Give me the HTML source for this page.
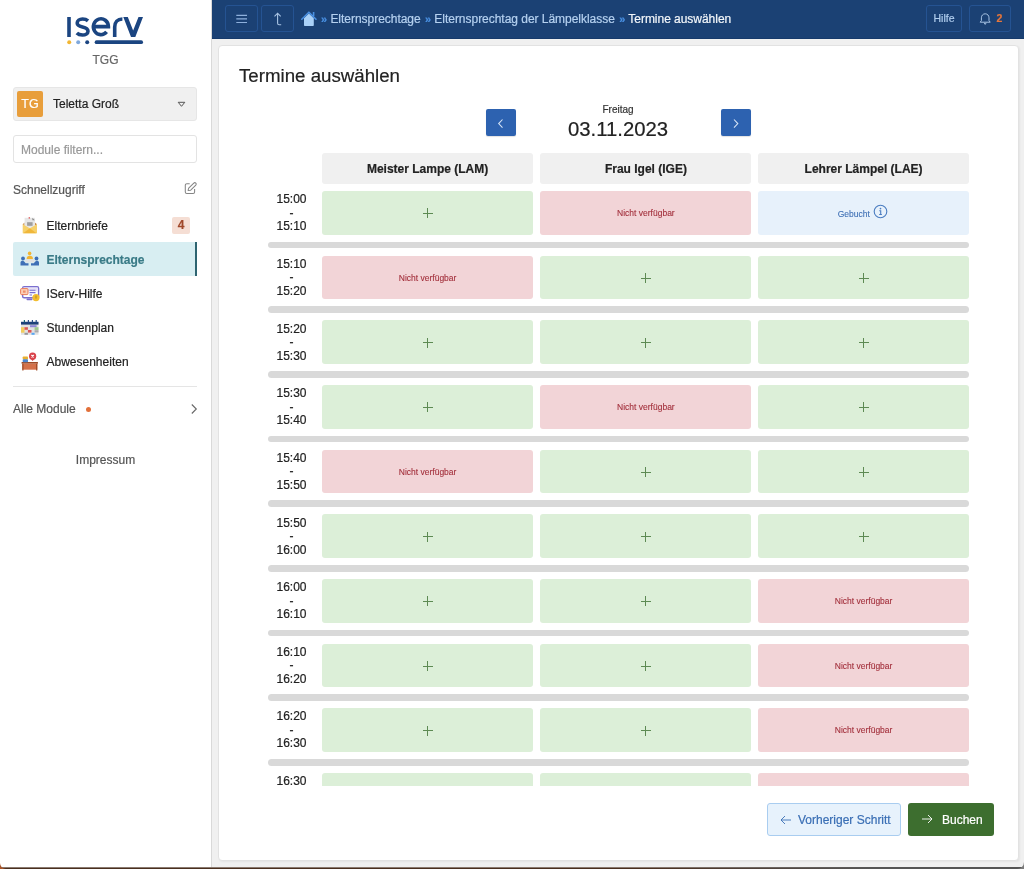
<!DOCTYPE html>
<html lang="de">
<head>
<meta charset="utf-8">
<title>Termine auswählen</title>
<style>
*{box-sizing:border-box;margin:0;padding:0}
html,body{width:1024px;height:869px;overflow:hidden;background:#fff}
body{font-family:"Liberation Sans",sans-serif;font-size:12px;color:#222;position:relative;will-change:transform;-webkit-text-stroke:0.2px currentColor}
.abs{position:absolute}
/* sidebar */
#sb{position:absolute;left:0;top:0;width:212px;height:869px;background:#fff;border-right:1px solid #d9d9d9}
#tgg{position:absolute;left:0;width:211px;top:52px;text-align:center;color:#666;font-size:12px;line-height:16px}
#user{position:absolute;left:13px;top:87px;width:184px;height:34px;background:#f0f0f0;border:1px solid #e6e6e6;border-radius:3px}
#av{position:absolute;left:3px;top:3px;width:26px;height:26px;background:#e89e3b;border-radius:2px;color:#fff;font-size:12.5px;line-height:26px;text-align:center}
#uname{position:absolute;left:39px;top:8px;font-size:12px;line-height:16px;color:#222}
#tri{position:absolute;left:163px;top:13px}
#filter{position:absolute;left:13px;top:135px;width:184px;height:28px;border:1px solid #e3e3e3;border-radius:3px;background:#fff}
#filter span{position:absolute;left:7px;top:6px;color:#999;font-size:12px;line-height:16px}
#schnell{position:absolute;left:13px;top:182px;color:#555;font-size:12px;line-height:16px}
#edit{position:absolute;left:183px;top:181px}
.mi{position:absolute;left:13px;width:184px;height:34px}
.mi .t{position:absolute;left:33.5px;top:10px;font-size:12px;line-height:16px;color:#222}
.mi svg{position:absolute;left:7px;top:5px}
.mi.act{background:#d8eef2;border-right:2px solid #2e6471;border-radius:2px 0 0 2px}
.mi.act .t{color:#3a7b87;font-weight:bold}
#badge{position:absolute;left:172px;top:217px;width:18px;height:17px;background:#f5ded4;border-radius:2px;color:#a0482a;font-weight:bold;font-size:12px;line-height:17px;text-align:center}
#div1{position:absolute;left:13px;top:386px;width:184px;height:1px;background:#e5e5e5}
#alle{position:absolute;left:13px;top:401px;color:#555;font-size:12px;line-height:16px}
#dot{position:absolute;left:86px;top:407px;width:5px;height:5px;border-radius:50%;background:#e2703a}
#chev{position:absolute;left:190px;top:403px}
#imp{position:absolute;left:0;width:211px;top:452px;text-align:center;color:#555;font-size:12px;line-height:16px}
/* topbar */
#top{position:absolute;left:212px;top:0;width:812px;height:39px;background:#1b4174;border-bottom:1px solid #163a6b}
.tb{position:absolute;top:5px;height:27px;border:1px solid #255392;border-radius:3px}
.bc{position:absolute;top:10.8px;font-size:12px;line-height:16px;color:#b5d1f0;white-space:nowrap;letter-spacing:-0.03px}
.raq{color:#4a90e2;font-size:11px;font-weight:bold;position:relative;left:1px;top:0px;margin-right:1px}
/* main */
#main{position:absolute;left:212px;top:38px;width:812px;height:831px;background:#f0f0f0}
#card{position:absolute;left:218px;top:45px;width:801px;height:816px;background:#fff;border:1px solid #e2e2e2;border-radius:4px;box-shadow:1px 1px 2px rgba(0,0,0,0.05)}
#title{position:absolute;left:239px;top:65px;font-size:18.7px;line-height:22px;color:#222;white-space:nowrap}
.navb{position:absolute;top:109px;width:30px;height:27px;background:#2d62b0;border-radius:2px;box-shadow:0 1px 1px rgba(0,0,0,0.12)}
#fr{position:absolute;left:568px;width:100px;top:102.7px;text-align:center;font-size:10px;line-height:13px;color:#333}
#date{position:absolute;left:558px;width:120px;top:116.8px;text-align:center;font-size:20.3px;line-height:24px;color:#222}
.hd{position:absolute;top:153px;height:31px;width:211.2px;background:#f0f0f0;border-radius:3px;text-align:center;font-weight:bold;font-size:12px;line-height:33px;color:#222}
#clip{position:absolute;left:0;top:0;width:1024px;height:786px;overflow:hidden}
.cell{position:absolute;border-radius:3px;display:flex;align-items:center;justify-content:center}
.cg{background:#dcefd8}
.cr{background:#f2d4d7}
.cb{background:#e7f1fb}
.cb > *{position:relative;left:-0.8px}
.plus{display:block;width:10px;height:10px;position:relative;margin-top:1px}
.plus:before{content:"";position:absolute;left:4.5px;top:0;width:1px;height:10px;background:#5d8a53}
.plus:after{content:"";position:absolute;left:0;top:4.5px;width:10px;height:1px;background:#5d8a53}
.na{-webkit-text-stroke:0.1px currentColor;font-size:8.5px;color:#a3303c;line-height:11px;padding-top:1px}
.gb{-webkit-text-stroke:0.1px currentColor;font-size:8.5px;color:#3f70b5;line-height:11px;padding-top:3px}
.info{margin-left:3px;margin-top:-2px}
.time{position:absolute;left:262px;width:59px;text-align:center;font-size:12px;line-height:13.5px;color:#222}
.sep{position:absolute;left:268px;width:701px;height:6.7px;background:#d9d9d9;border-radius:4px}
.btn{position:absolute;top:803px;height:33px;border-radius:3px;font-size:12px;line-height:17.4px}
#prev{left:767px;width:134px;background:#e7f2fc;border:1px solid #a9cdf0;color:#3a6fb5}
#book{left:908px;width:86px;background:#3d6e2f;color:#fff}
#bottomstrip{position:absolute;left:0;top:867px;width:1024px;height:2px;background:linear-gradient(to bottom,#8a7a70 0,#8a7a70 1px,#4a2f1e 1px);}
#bsr{position:absolute;left:640px;top:867px;width:384px;height:2px;background:linear-gradient(to right,rgba(80,80,80,0),#555 60%)}
</style>
</head>
<body>
<div id="sb">
  <svg class="abs" style="left:60px;top:8px" width="90" height="40" viewBox="0 0 90 40">
    <g fill="none" stroke="#1b4581" stroke-width="3.6">
      <path d="M9 9V29" stroke-linecap="butt"/>
      <path d="M28 12.8C26.5 11.5 24.5 11 22.5 11C19.5 11 17.2 12.8 17.2 15C17.2 17.5 19.5 18.3 22.5 19C25.8 19.7 28 20.7 28 23.2C28 25.6 25.5 27 22.5 27C20 27 18 26.2 16.8 25"/>
      <path d="M33.3 18.6H48.4A7.5 7.95 0 1 0 46.6 23.9"/>
      <path d="M54.7 29V19C54.7 14 57.5 11 62.4 11"/>
    </g>
    <polygon fill="#1b4581" points="63.3,9 67.8,9 73.15,22.5 78.5,9 83,9 75.3,29 71,29"/>
    <circle cx="9.2" cy="34.3" r="2" fill="#f2b632"/>
    <circle cx="18.2" cy="34.3" r="2" fill="#7fa8dc"/>
    <circle cx="27.2" cy="34.3" r="2" fill="#1b4581"/>
    <path d="M36.5 34.2H81.2" stroke="#1b4581" stroke-width="3.7" stroke-linecap="round"/>
  </svg>
  <div id="tgg">TGG</div>
  <div id="user">
    <div id="av">TG</div>
    <div id="uname">Teletta Groß</div>
    <svg id="tri" width="9" height="7" viewBox="0 0 9 7"><path d="M1.2 1.3H7.8L4.5 5.3Z" fill="none" stroke="#555" stroke-width="1" stroke-linejoin="round"/></svg>
  </div>
  <div id="filter"><span>Module filtern...</span></div>
  <div id="schnell">Schnellzugriff</div>
  <svg id="edit" width="16" height="14" viewBox="0 0 16 14"><path d="M6.7 2.7H3.8C3 2.7 2.3 3.4 2.3 4.2V10.9C2.3 11.7 3 12.4 3.8 12.4H10.1C10.9 12.4 11.6 11.7 11.6 10.9V8" fill="none" stroke="#858585" stroke-width="1.05"/><path d="M5.1 9.4L5.7 7.2L10.8 2.1C11.4 1.5 12.2 1.5 12.8 2.1C13.4 2.7 13.4 3.5 12.8 4.1L7.7 9.2Z" fill="none" stroke="#858585" stroke-width="1.05" stroke-linejoin="round"/></svg>

  <div class="mi" style="top:208px">
    <svg width="22" height="24" viewBox="0 0 22 24">
      <path d="M2.7 11.2L4.6 9.6V13ZM17 11.2L14.9 9.6V13Z" fill="#c98a4a"/>
      <rect x="4.6" y="4.8" width="10.3" height="10" fill="#e6e6e6"/>
      <path d="M12.4 4.8L14.9 7.3H12.4Z" fill="#8a8a8a"/>
      <rect x="7.1" y="9.2" width="5.5" height="3.6" fill="#9d9d9d"/>
      <circle cx="9.3" cy="4.9" r="0.8" fill="#e06060"/>
      <path d="M2.7 11.2L9.8 15.2L17 11.2V20.3H2.7Z" fill="#f6d06a"/>
      <path d="M3.2 20.3L9.8 15.2L16.5 20.3Z" fill="#f0b73a"/>
    </svg>
    <span class="t">Elternbriefe</span>
  </div>
  <div id="badge">4</div>
  <div class="mi act" style="top:242px">
    <svg width="22" height="24" viewBox="0 0 22 24">
      <circle cx="9.6" cy="6.4" r="1.8" fill="#f2b431"/>
      <path d="M6.6 12.2C6.6 9.8 7.8 8.8 9.8 8.8C11.8 8.8 13 9.8 13 12.2Z" fill="#f2b431"/>
      <rect x="5.2" y="12.2" width="9.4" height="3.3" rx="1" fill="#e2e2e2"/>
      <circle cx="3" cy="11.5" r="1.9" fill="#3f6fb6"/>
      <path d="M0.5 18.5V15.5C0.5 14.3 1.5 13.8 2.6 13.8C3.8 13.8 4.6 14.8 5.6 16.3H8.5V18.5Z" fill="#3f6fb6"/>
      <circle cx="16.5" cy="11.5" r="1.9" fill="#3f6fb6"/>
      <path d="M19 18.5V15.5C19 14.3 18 13.8 16.9 13.8C15.7 13.8 14.9 14.8 13.9 16.3H11V18.5Z" fill="#3f6fb6"/>
    </svg>
    <span class="t">Elternsprechtage</span>
  </div>
  <div class="mi" style="top:276px">
    <svg width="22" height="24" viewBox="0 0 22 24">
      <rect x="2.6" y="5.7" width="16" height="11" rx="1.5" fill="#fff" stroke="#7b6fcf" stroke-width="1.4"/>
      <rect x="3.4" y="6.5" width="14.4" height="4" fill="#e6e2f7"/>
      <rect x="6.5" y="17.6" width="6" height="1.6" rx="0.8" fill="#7b6fcf"/>
      <path d="M9.5 9.3H15.5M9.5 11.6H15.5M9.5 14H12" stroke="#7b6fcf" stroke-width="1.1"/>
      <rect x="0.6" y="7.6" width="7.4" height="6" rx="1" fill="#fbd0b8" stroke="#ea7c58" stroke-width="1"/>
      <rect x="3" y="9.5" width="2.6" height="2.2" fill="#ef8f6a"/>
      <circle cx="16" cy="16.6" r="3.6" fill="#f2bd2f"/>
      <rect x="15.5" y="14.6" width="1" height="3" fill="#b08a20"/>
    </svg>
    <span class="t">IServ-Hilfe</span>
  </div>
  <div class="mi" style="top:310px">
    <svg width="22" height="24" viewBox="0 0 22 24">
      <rect x="1" y="6.8" width="17.5" height="13" fill="#e2e2e2"/>
      <rect x="1" y="6.8" width="17.5" height="2.8" fill="#1c3f78"/>
      <rect x="3.8" y="5" width="1.2" height="2.4" fill="#1c6a78"/>
      <rect x="7.8" y="5" width="1.2" height="2.4" fill="#2a4f8a"/>
      <rect x="11.8" y="5" width="1.2" height="2.4" fill="#2a4f8a"/>
      <rect x="15.6" y="5" width="1.2" height="2.4" fill="#2a4f8a"/>
      <rect x="10" y="10.2" width="6.6" height="2" fill="#8d86d6"/>
      <rect x="1" y="12.2" width="3.5" height="5.5" fill="#f2cd5e"/>
      <rect x="4.5" y="12.2" width="3.4" height="2.6" fill="#dc5656"/>
      <rect x="7.9" y="15" width="3.6" height="2.6" fill="#dc5656"/>
      <rect x="14.6" y="12.2" width="3.9" height="2.8" fill="#9fcb8e"/>
      <rect x="4.5" y="17.8" width="3.4" height="2" fill="#999"/>
      <rect x="14.6" y="15.2" width="3.9" height="2.2" fill="#aaa"/>
      <rect x="11.5" y="17.8" width="3.1" height="2" fill="#58a6f2"/>
    </svg>
    <span class="t">Stundenplan</span>
  </div>
  <div class="mi" style="top:344px">
    <svg width="22" height="24" viewBox="0 0 22 24">
      <rect x="1.6" y="13" width="16.3" height="1.7" fill="#9c4a26"/>
      <rect x="2.3" y="14.7" width="15" height="6" fill="#d4714a"/>
      <rect x="2.3" y="14.7" width="1.2" height="6.8" fill="#9c4a26"/>
      <rect x="16.1" y="14.7" width="1.2" height="6.8" fill="#9c4a26"/>
      <rect x="2.7" y="7.5" width="5.3" height="3" rx="0.8" fill="#e8b030"/>
      <rect x="2.7" y="10.3" width="5.3" height="3" rx="0.8" fill="#4a86d0"/>
      <circle cx="12.6" cy="7.2" r="3.6" fill="#d9424a"/>
      <path d="M10.3 9.6L12.6 12L14.9 9.6Z" fill="#d9424a"/>
      <path d="M11.4 6L13.8 8.4M13.8 6L11.4 8.4" stroke="#fff" stroke-width="1.2"/>
    </svg>
    <span class="t">Abwesenheiten</span>
  </div>
  <div id="div1"></div>
  <div id="alle">Alle Module</div>
  <div id="dot"></div>
  <svg id="chev" width="8" height="12" viewBox="0 0 8 12"><path d="M1.8 1.5L6.3 6L1.8 10.5" fill="none" stroke="#666" stroke-width="1.1"/></svg>
  <div id="imp">Impressum</div>
</div>

<div id="main"></div>
<div id="top">
  <div class="tb" style="left:13px;width:33px">
    <svg class="abs" style="left:10px;top:8px" width="12" height="10" viewBox="0 0 12 10"><path d="M0.3 1.4H11M0.3 4.9H11M0.3 8.5H11" stroke="#8eb0dc" stroke-width="1.2"/></svg>
  </div>
  <div class="tb" style="left:49px;width:33px">
    <svg class="abs" style="left:11px;top:6px" width="10" height="14" viewBox="0 0 10 14"><path d="M1.5 4.3L4.6 1.2L7.7 4.3M4.6 1.2V11.3C4.6 12.2 5.2 12.8 6.1 12.8H8.2" fill="none" stroke="#a9c4e4" stroke-width="1.1"/></svg>
  </div>
  <svg class="abs" style="left:88px;top:10px" width="18" height="17" viewBox="0 0 18 17">
    <path d="M4 8.2V15.2C4 15.7 4.3 16 4.8 16H13C13.5 16 13.8 15.7 13.8 15.2V8.2L8.9 3.5Z" fill="#a9d0f7"/>
    <path d="M1.8 9.2L8.9 2.2L16 9.2" fill="none" stroke="#4a90e2" stroke-width="1.6" stroke-linejoin="round" stroke-linecap="round"/>
    <rect x="12.8" y="2" width="1.6" height="4" fill="#4a90e2"/>
  </svg>
  <span class="bc" style="left:108px"><span class="raq">»</span> Elternsprechtage <span class="raq">»</span> Elternsprechtag der Lämpelklasse <span class="raq">»</span> <span style="color:#f2f6fa">Termine auswählen</span></span>
  <div class="tb" style="left:714px;width:36px">
    <span class="abs" style="left:6.5px;top:5.3px;font-size:10.5px;line-height:14px;color:#b0cdee">Hilfe</span>
  </div>
  <div class="tb" style="left:757px;width:42px">
    <svg class="abs" style="left:8.5px;top:6px" width="13" height="14" viewBox="0 0 13 14"><path d="M1.2 10.2H11.2L10 8.6V5.8C10 3.6 8.5 1.8 6.2 1.8C3.9 1.8 2.4 3.6 2.4 5.8V8.6Z" fill="none" stroke="#a9c4e4" stroke-width="1" stroke-linejoin="round"/><path d="M5.2 10.8L6.2 12.4L7.2 10.8" fill="none" stroke="#a9c4e4" stroke-width="1"/></svg>
    <span class="abs" style="left:26.5px;top:4.8px;font-size:10.5px;line-height:14px;color:#e8763a;font-weight:bold">2</span>
  </div>
</div>

<div id="card"></div>
<div id="title">Termine auswählen</div>
<div class="navb" style="left:486px">
  <svg class="abs" style="left:10px;top:8.5px" width="10" height="12" viewBox="0 0 10 12"><path d="M6.5 1.5L2.7 5.6L6.5 9.7" fill="none" stroke="#d5e3f5" stroke-width="1.1"/></svg>
</div>
<div id="fr">Freitag</div>
<div id="date">03.11.2023</div>
<div class="navb" style="left:721px">
  <svg class="abs" style="left:10px;top:8.5px" width="10" height="12" viewBox="0 0 10 12"><path d="M3 1.5L6.8 5.6L3 9.7" fill="none" stroke="#d5e3f5" stroke-width="1.1"/></svg>
</div>
<div class="hd" style="left:322px">Meister Lampe (LAM)</div>
<div class="hd" style="left:540.3px">Frau Igel (IGE)</div>
<div class="hd" style="left:758px">Lehrer Lämpel (LAE)</div>
<div id="clip">
<div class="time" style="top:193.20px">15:00<br>-<br>15:10</div>
<div class="cell cg" style="left:322.00px;top:191.00px;width:211.2px;height:43.8px"><span class="plus"></span></div>
<div class="cell cr" style="left:540.30px;top:191.00px;width:211.2px;height:43.8px"><span class="na">Nicht verfügbar</span></div>
<div class="cell cb" style="left:758.00px;top:191.00px;width:211.2px;height:43.8px"><span class="gb">Gebucht</span><svg class="info" width="15" height="15" viewBox="0 0 15 15"><circle cx="7.5" cy="7.5" r="6.3" fill="none" stroke="#4a7cc0" stroke-width="1.1"/><circle cx="7.5" cy="4.6" r="0.85" fill="#4a7cc0"/><path d="M6.3 6.7H7.7V10.4M6.2 10.5H8.9" stroke="#4a7cc0" stroke-width="1.1" fill="none"/></svg></div>
<div class="sep" style="top:241.70px"></div>
<div class="time" style="top:257.86px">15:10<br>-<br>15:20</div>
<div class="cell cr" style="left:322.00px;top:255.66px;width:211.2px;height:43.8px"><span class="na">Nicht verfügbar</span></div>
<div class="cell cg" style="left:540.30px;top:255.66px;width:211.2px;height:43.8px"><span class="plus"></span></div>
<div class="cell cg" style="left:758.00px;top:255.66px;width:211.2px;height:43.8px"><span class="plus"></span></div>
<div class="sep" style="top:306.36px"></div>
<div class="time" style="top:322.52px">15:20<br>-<br>15:30</div>
<div class="cell cg" style="left:322.00px;top:320.32px;width:211.2px;height:43.8px"><span class="plus"></span></div>
<div class="cell cg" style="left:540.30px;top:320.32px;width:211.2px;height:43.8px"><span class="plus"></span></div>
<div class="cell cg" style="left:758.00px;top:320.32px;width:211.2px;height:43.8px"><span class="plus"></span></div>
<div class="sep" style="top:371.02px"></div>
<div class="time" style="top:387.18px">15:30<br>-<br>15:40</div>
<div class="cell cg" style="left:322.00px;top:384.98px;width:211.2px;height:43.8px"><span class="plus"></span></div>
<div class="cell cr" style="left:540.30px;top:384.98px;width:211.2px;height:43.8px"><span class="na">Nicht verfügbar</span></div>
<div class="cell cg" style="left:758.00px;top:384.98px;width:211.2px;height:43.8px"><span class="plus"></span></div>
<div class="sep" style="top:435.68px"></div>
<div class="time" style="top:451.84px">15:40<br>-<br>15:50</div>
<div class="cell cr" style="left:322.00px;top:449.64px;width:211.2px;height:43.8px"><span class="na">Nicht verfügbar</span></div>
<div class="cell cg" style="left:540.30px;top:449.64px;width:211.2px;height:43.8px"><span class="plus"></span></div>
<div class="cell cg" style="left:758.00px;top:449.64px;width:211.2px;height:43.8px"><span class="plus"></span></div>
<div class="sep" style="top:500.34px"></div>
<div class="time" style="top:516.50px">15:50<br>-<br>16:00</div>
<div class="cell cg" style="left:322.00px;top:514.30px;width:211.2px;height:43.8px"><span class="plus"></span></div>
<div class="cell cg" style="left:540.30px;top:514.30px;width:211.2px;height:43.8px"><span class="plus"></span></div>
<div class="cell cg" style="left:758.00px;top:514.30px;width:211.2px;height:43.8px"><span class="plus"></span></div>
<div class="sep" style="top:565.00px"></div>
<div class="time" style="top:581.16px">16:00<br>-<br>16:10</div>
<div class="cell cg" style="left:322.00px;top:578.96px;width:211.2px;height:43.8px"><span class="plus"></span></div>
<div class="cell cg" style="left:540.30px;top:578.96px;width:211.2px;height:43.8px"><span class="plus"></span></div>
<div class="cell cr" style="left:758.00px;top:578.96px;width:211.2px;height:43.8px"><span class="na">Nicht verfügbar</span></div>
<div class="sep" style="top:629.66px"></div>
<div class="time" style="top:645.82px">16:10<br>-<br>16:20</div>
<div class="cell cg" style="left:322.00px;top:643.62px;width:211.2px;height:43.8px"><span class="plus"></span></div>
<div class="cell cg" style="left:540.30px;top:643.62px;width:211.2px;height:43.8px"><span class="plus"></span></div>
<div class="cell cr" style="left:758.00px;top:643.62px;width:211.2px;height:43.8px"><span class="na">Nicht verfügbar</span></div>
<div class="sep" style="top:694.32px"></div>
<div class="time" style="top:710.48px">16:20<br>-<br>16:30</div>
<div class="cell cg" style="left:322.00px;top:708.28px;width:211.2px;height:43.8px"><span class="plus"></span></div>
<div class="cell cg" style="left:540.30px;top:708.28px;width:211.2px;height:43.8px"><span class="plus"></span></div>
<div class="cell cr" style="left:758.00px;top:708.28px;width:211.2px;height:43.8px"><span class="na">Nicht verfügbar</span></div>
<div class="sep" style="top:758.98px"></div>
<div class="time" style="top:775.14px">16:30<br>-<br>16:40</div>
<div class="cell cg" style="left:322.00px;top:772.94px;width:211.2px;height:43.8px"><span class="plus"></span></div>
<div class="cell cg" style="left:540.30px;top:772.94px;width:211.2px;height:43.8px"><span class="plus"></span></div>
<div class="cell cr" style="left:758.00px;top:772.94px;width:211.2px;height:43.8px"><span class="na">Nicht verfügbar</span></div>
<div class="sep" style="top:823.64px"></div>
</div>
<div class="btn" id="prev">
  <svg class="abs" style="left:12px;top:11px" width="12" height="10" viewBox="0 0 12 10"><path d="M5 1L1 5L5 9M1 5H11" fill="none" stroke="#3a6fb5" stroke-width="0.9"/></svg>
  <span class="abs" style="left:30px;top:8px">Vorheriger Schritt</span>
</div>
<div class="btn" id="book">
  <svg class="abs" style="left:13px;top:11px" width="12" height="10" viewBox="0 0 12 10"><path d="M7 1L11 5L7 9M1 5H11" fill="none" stroke="#fff" stroke-width="0.9"/></svg>
  <span class="abs" style="left:34px;top:9px">Buchen</span>
</div>
<div id="bottomstrip"></div><div id="bsr"></div>
<svg class="abs" style="left:0;top:863px" width="6" height="6" viewBox="0 0 6 6"><path d="M0 0V6H6A6 6 0 0 1 0 0Z" fill="#a8552a"/></svg>
<svg class="abs" style="left:1017px;top:862px" width="7" height="7" viewBox="0 0 7 7"><path d="M7 0V7H0A7 7 0 0 0 7 0Z" fill="#7a7a7a"/></svg>
</body>
</html>
